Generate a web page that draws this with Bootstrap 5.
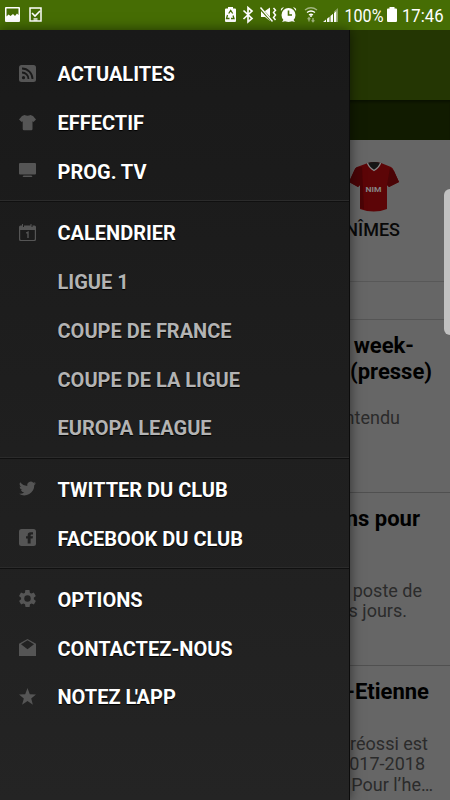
<!DOCTYPE html>
<html lang="fr">
<head>
<meta charset="utf-8">
<meta name="viewport" content="width=device-width, initial-scale=1">
<title>Menu du club</title>
<link href="https://cdn.jsdelivr.net/npm/bootstrap@5.3.0/dist/css/bootstrap.min.css" rel="stylesheet">
<style>
body{width:450px;height:800px;font-family:Roboto,sans-serif;background:#666;overflow:hidden}
svg{display:block;flex-shrink:0}
.status{height:30px;background:#466d04}
.appbar{height:70px;background:#243603}
.tabs{height:40px;background:#111b00;box-shadow:inset 0 3px 2px -1px #0b1200}
.page{height:770px;color:#000;overflow:hidden}
.page>*{flex-shrink:0}
.match{height:142px;border-bottom:1px solid #585858;padding:21px 50px 0 0}
.team{font-size:18px;font-weight:500;line-height:24px;margin-top:5px;color:#090909}
.band{height:38px;border-bottom:1px solid #555}
.news{height:173px;border-bottom:1px solid #505050;padding-top:13px}
.news h2{font-size:22px;font-weight:700;line-height:26px;margin:0;white-space:nowrap}
.news p{font-size:18px;line-height:20.4px;margin:0;color:#2b2b2b;white-space:nowrap}
.news .after-two{margin-top:23px}
.news .after-one{margin-top:49px}
.news .after-short{margin-top:29px}
.drawer{top:30px;left:0;width:350px;height:770px;padding-top:20px;background:linear-gradient(#191919,#242424);border-right:1px solid #0c0c0c;box-shadow:0 0 12px rgba(0,0,0,.55)}
.group{margin:0;padding:0}
.group+.group{border-top:1px solid #101010;margin-top:5px;padding-top:6.7px;box-shadow:0 -1px #2b2b2b}
.entry{height:48.75px;padding-left:19px;font-size:20px;font-weight:700;color:#fff;text-shadow:0 1px 1px #000;line-height:24px}
.entry svg{width:17px;height:17px;fill:#555;margin-right:21.500px;position:relative;top:-1px}
.entry.child{padding-left:57.5px;color:#b3b3b3}
.tight{letter-spacing:-1.500px}
.handle{right:0;top:189px;width:6px;height:146px;background:#c1c1c1;border-radius:6px 0 0 6px}
</style>
<script src="https://cdn.jsdelivr.net/npm/bootstrap@5.3.0/dist/js/bootstrap.bundle.min.js"></script>
</head>
<body class="position-relative">
<header class="status">
<svg width="450" height="30" fill="#fff" font-family="Roboto, sans-serif" font-size="18.3">
<!-- gallery and task notifications -->
<path fill-rule="evenodd" d="M6 7h13q1 0 1 1v13q0 1-1 1H6q-1 0-1-1V8q0-1 1-1zm.5 1.500v8l2-2 2 1.500 2.500-2 2 2 2-2.500 1.500 1.500V8.500z"/>
<path fill="none" stroke="#fff" stroke-width="1.500" d="M30 8h11v13H30z"/><path fill="none" stroke="#fff" stroke-width="1.600" d="M32 13l3 3 5-5"/><path d="M33.500 18h4v3h-4z" opacity=".7"/>
<!-- battery saver -->
<path d="M228 7h5v1.500h2q1 0 1 1V21q0 1-1 1h-9q-1 0-1-1V9.500q0-1 1-1h2z"/><path d="M228.700 13.500l2-3 2 3M233 15.500l1 3h-3M227.500 15l-1 3.500h3" fill="none" stroke="#466d04" stroke-width="1.300"/>
<path d="M243.500 10.500l8.500 8-4 3.500V7.500l4 3.500-8.500 8" fill="none" stroke="#fff" stroke-width="1.700"/>
<!-- muted sound -->
<path d="M261 11h4l5-3.500V21l-5-4h-4z"/><path d="M260 8l12 13" stroke="#466d04" stroke-width="2.600"/><path d="M260.500 7.500l12 14M273.500 8l2 2.200-2 2.300 2 2.500-2 2.500 2 2.500" fill="none" stroke="#fff" stroke-width="1.500"/>
<!-- alarm -->
<circle cx="288.500" cy="15" r="7"/><path d="M281 11q-1-3 3-4zM296 11q1-3-3-4zM282 22l2-3 2 2zM295 22l-2-3-2 2z"/><path d="M288.500 10.500V15H292" fill="none" stroke="#466d04" stroke-width="1.600"/>
<g fill="none" stroke="#fff" stroke-width="1.300"><path d="M305 10q6-4.500 12 0" opacity=".5"/><path d="M307 12.500q4-3 8 0M309 15q2-1.500 4 0"/><path d="M309 18v3.500M307.700 19.300l1.300-1.500 1.300 1.500M313 18v3.500M311.700 20.200l1.300 1.500 1.300-1.500" opacity=".5"/></g><circle cx="311" cy="16" r="1"/>
<path d="M323 22l3-2.500V22zM327 18.700l2.500-2V22H327zM330.500 16l2.500-2.300V22h-2.500zM334 13l2.500-2.200V22H334z"/><path d="M334 11.500l4-3.500V22h-1V10.500l-3 2z" opacity=".4"/>
<text x="344.500" y="22" textLength="39" lengthAdjust="spacingAndGlyphs">100%</text>
<path d="M389.500 7h5v1.500h1.500q1 0 1 1V21q0 1-1 1h-8q-1 0-1-1V9.500q0-1 1-1h1.500z"/>
<text x="402" y="22" textLength="41.500" lengthAdjust="spacingAndGlyphs">17:46</text>
</svg>
</header>
<main class="page d-flex flex-column">
<div class="appbar"></div>
<div class="tabs"></div>
<section class="match d-flex flex-column align-items-end">
<svg width="50" height="52" viewBox="0 0 50 52">
<path d="M18 2q6-2 13 0l10 4q2 1 3 4l5 11-10 5-2-2v24q-13 5-27 0V24l-2 2-9-5 5-11q1-3 3-4z" fill="#5c0507"/>
<path d="M12 6l2 42-4-1V24l-2 2-9-5 5-11q1-3 3-4zM40 7l-3 17 2 2 10-5-5-11z" fill="#4a0406"/>
<path d="M17.500 2q7-2 13 0-1 4-6.500 7.500-5.500-3.500-6.500-7.500z" fill="#151515"/><path d="M17.500 2q1 4 6.500 7.500Q29.500 6 30.500 2" fill="none" stroke="#888" stroke-width="1.200"/>
<text x="23.500" y="31" text-anchor="middle" fill="#858585" font-family="Roboto,sans-serif" font-weight="700" font-size="7.500" textLength="16" lengthAdjust="spacingAndGlyphs">NIM</text>
</svg>
<div class="team">NÎMES</div>
</section>
<div class="band"></div>
<article class="news text-end"><h2 style="padding-right:36px">week-</h2><h2 style="padding-right:18px">(presse)</h2><p class="after-two" style="padding-right:50px">ntendu</p></article>
<article class="news text-end"><h2 style="padding-right:30px">ns pour</h2><p class="after-one" style="padding-right:28px">poste de</p><p style="padding-right:43px">s jours.</p></article>
<article class="news text-end border-0"><h2 style="padding-right:21px">-Etienne</h2><p class="after-short" style="padding-right:22px">Dréossi est</p><p style="padding-right:25px">2017-2018</p><p style="padding-right:17px">Pour l’he…</p></article>
</main>
<nav class="drawer position-absolute">
<div class="group">
<div class="entry d-flex align-items-center"><svg viewBox="0 0 17 17"><rect width="17" height="17" rx="2.500"/><g fill="none" stroke="#1a1a1a" stroke-width="1.800"><path d="M3 3.500a10.500 10.500 0 0 1 10.500 10.500M3 7.500a6.500 6.500 0 0 1 6.500 6.500"/></g><circle cx="4.500" cy="12.700" r="1.600" fill="#1a1a1a"/></svg>ACTUALITES</div>
<div class="entry d-flex align-items-center"><svg viewBox="0 0 17 17"><path d="M5.500 1q3 1.500 6 0L14 2l3 3.500-2.500 2.500-1-.7V15q0 1.200-1.200 1.200H5Q3.700 16.200 3.700 15V7.300l-1 .7L0 5.500 3 2z"/></svg>EFFECTIF</div>
<div class="entry d-flex align-items-center"><svg viewBox="0 0 17 17"><rect y="1" width="17" height="11.500" rx="1"/><path d="M4.500 13.500h8l1 1.500h-10z"/></svg>PROG. TV</div>
</div>
<div class="group">
<div class="entry d-flex align-items-center"><svg viewBox="0 0 17 17"><path fill-rule="evenodd" d="M1.500 1.500H3V0h1v3h1V1.500h6.500V0h1v3h1V1.500h2q1.500 0 1.500 1.500v12.500q0 1.500-1.500 1.500h-14Q0 17 0 15.500V3q0-1.500 1.500-1.500zM1.200 6v9q0 1 1 1h12.600q1 0 1-1V6z"/><path d="M7.200 9.200L9 8.200V14" fill="none" stroke="#555" stroke-width="1.400"/></svg>CALENDRIER</div>
<div class="entry child d-flex align-items-center">LIGUE 1</div>
<div class="entry child d-flex align-items-center">COUPE DE FRANCE</div>
<div class="entry child d-flex align-items-center">COUPE DE LA LIGUE</div>
<div class="entry child d-flex align-items-center">EUROPA LEAGUE</div>
</div>
<div class="group">
<div class="entry d-flex align-items-center"><svg viewBox="0 0 24 24"><path d="M24 4.600a10 10 0 0 1-2.800.8 5 5 0 0 0 2.100-2.700 10 10 0 0 1-3.100 1.200 4.900 4.900 0 0 0-8.400 4.500A14 14 0 0 1 1.700 3.200a4.900 4.900 0 0 0 1.500 6.500 5 5 0 0 1-2.200-.6 4.900 4.900 0 0 0 3.900 4.900 5 5 0 0 1-2.200.1 4.900 4.900 0 0 0 4.600 3.400A10 10 0 0 1 0 19.500a14 14 0 0 0 21.500-12.400A10 10 0 0 0 24 4.600z"/></svg>TWITTER DU CLUB</div>
<div class="entry d-flex align-items-center"><svg viewBox="0 0 17 17"><rect width="17" height="17" rx="2.500"/><path d="M8.700 14.500V9.500H7V7.300h1.700V6q0-2.700 2.800-2.700H14v2.200h-1.600q-.8 0-.8.900v.9H14l-.4 2.200h-2v5z" fill="#202020"/></svg>FACEBOOK DU CLUB</div>
</div>
<div class="group">
<div class="entry d-flex align-items-center"><svg viewBox="2 2 20 20"><path d="M19.400 13c0-.3.100-.6.100-1s0-.7-.1-1l2.100-1.600c.2-.2.200-.4.100-.6l-2-3.500c-.1-.2-.4-.3-.6-.2l-2.500 1a7 7 0 0 0-1.700-1l-.4-2.600c0-.3-.2-.5-.5-.5h-4c-.2 0-.4.200-.5.400L9 5.100a8 8 0 0 0-1.700 1l-2.500-1c-.2-.1-.5 0-.6.200l-2 3.500c-.1.200-.1.400.1.600L4.500 11a8 8 0 0 0 0 2l-2.100 1.600c-.2.200-.2.400-.1.600l2 3.500c.1.200.4.300.6.200l2.500-1a7 7 0 0 0 1.700 1l.4 2.600c0 .3.200.5.500.5h4c.200 0 .4-.2.500-.4l.4-2.700a8 8 0 0 0 1.700-1l2.500 1c.2.100.5 0 .6-.2l2-3.500c.1-.2.100-.4-.1-.6z"/><circle cx="12" cy="12" r="3.800" fill="#222"/></svg>OPTIONS</div>
<div class="entry d-flex align-items-center"><svg viewBox="0 0 17 17"><path fill-rule="evenodd" d="M8.500 0L17 4.800V17H0V4.800zM8.500 1.300L2 5.300l6.500 5 6.500-5z"/></svg>CONTACTEZ-NOUS</div>
<div class="entry d-flex align-items-center"><svg viewBox="0 0 17 17"><path d="M8.500 0l2.300 6.200 6.200.2-4.800 4 1.700 6.300-5.400-3.600-5.400 3.600 1.700-6.300L0 6.400l6.200-.2z"/></svg><span>NOTEZ <span class="tight">L'</span>APP</span></div>
</div>
</nav>
<div class="handle position-absolute"></div>
</body>
</html>
